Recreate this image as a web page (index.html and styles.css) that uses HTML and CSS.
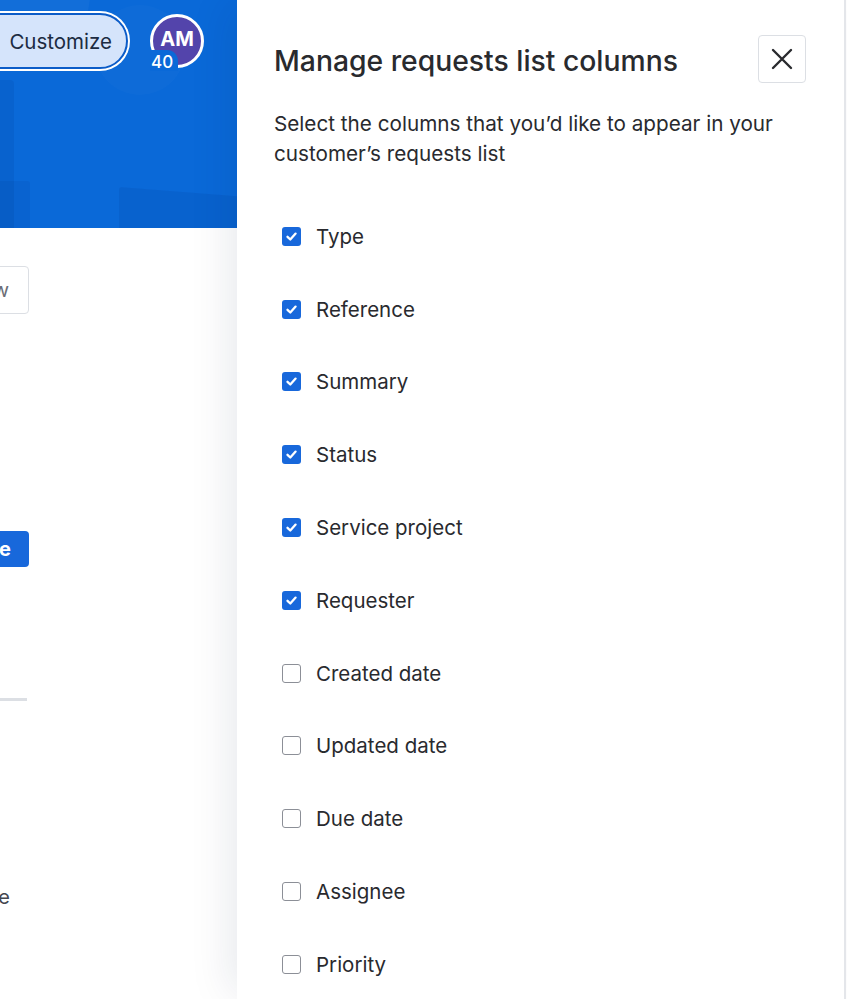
FILE: index.html
```html
<!DOCTYPE html>
<html lang="en">
<head>
    <meta charset="UTF-8">
    <meta name="viewport" content="width=device-width, initial-scale=1.0">
    <title>Manage requests list columns</title>
    <link rel="stylesheet" href="styles.css">
</head>
<body>
    <div class="app">
        <div class="backdrop">
            <div class="banner">
                <div class="shape circle-a"></div>
                <div class="shape circle-b"></div>
                <div class="shape tower"></div>
                <div class="shape block"></div>
                <div class="shape roof"></div>
                <div class="banner-actions">
                    <button class="customize-btn">Customize</button>
                    <div class="avatar">
                        AM
                        <span class="avatar-count">40</span>
                    </div>
                </div>
            </div>
            <div class="page-body">
                <div class="view-btn">Save view</div>
                <div class="primary-btn">Save</div>
                <div class="divider"></div>
                <div class="page-text">Due date</div>
            </div>
        </div>

        <aside class="drawer">
            <div class="drawer-header">
                <h2>Manage requests list columns</h2>
                <button class="close-btn" aria-label="Close">
                    <svg width="22" height="22" viewBox="0 0 22 22">
                        <path d="M2 2 L20 20 M20 2 L2 20" stroke="#292a2e" stroke-width="2.4" stroke-linecap="round"/>
                    </svg>
                </button>
            </div>
            <p class="drawer-desc">Select the columns that you’d like to appear in your customer’s requests list</p>

            <ul class="column-list">
                <li class="column-item"><span class="checkbox checked"></span>Type</li>
                <li class="column-item"><span class="checkbox checked"></span>Reference</li>
                <li class="column-item"><span class="checkbox checked"></span>Summary</li>
                <li class="column-item"><span class="checkbox checked"></span>Status</li>
                <li class="column-item"><span class="checkbox checked"></span>Service project</li>
                <li class="column-item"><span class="checkbox checked"></span>Requester</li>
                <li class="column-item"><span class="checkbox"></span>Created date</li>
                <li class="column-item"><span class="checkbox"></span>Updated date</li>
                <li class="column-item"><span class="checkbox"></span>Due date</li>
                <li class="column-item"><span class="checkbox"></span>Assignee</li>
                <li class="column-item"><span class="checkbox"></span>Priority</li>
            </ul>
        </aside>
    </div>
</body>
</html>
```

FILE: styles.css
```css
* {
    margin: 0;
    padding: 0;
    box-sizing: border-box;
    font-family: Inter, 'Noto Sans', sans-serif;
}

body {
    background: white;
    color: #292a2e;
}

.app {
    display: flex;
    height: 999px;
    overflow: hidden;
    padding-right: 1px;
}

/* page behind the drawer */
.backdrop {
    width: 237px;
    flex-shrink: 0;
    overflow: hidden;
    background: white;
}

.banner {
    position: relative;
    height: 228px;
    background: #0a69d8;
    overflow: hidden;
}

.shape {
    position: absolute;
}

.circle-a {
    left: -40px;
    top: -70px;
    width: 130px;
    height: 130px;
    border-radius: 50%;
    background: rgba(255, 255, 255, 0.035);
}

.circle-b {
    left: 95px;
    top: 5px;
    width: 90px;
    height: 90px;
    border-radius: 50%;
    background: rgba(255, 255, 255, 0.02);
}

.tower {
    left: -20px;
    top: 80px;
    width: 34px;
    height: 148px;
    border-radius: 0 4px 0 0;
    background: rgba(0, 40, 120, 0.1);
}

.block {
    left: -20px;
    top: 181px;
    width: 50px;
    height: 47px;
    border-radius: 0 3px 0 0;
    background: rgba(0, 40, 120, 0.08);
}

.roof {
    left: 119px;
    top: 187px;
    width: 130px;
    height: 41px;
    background: rgba(0, 40, 120, 0.1);
    clip-path: polygon(0 0, 100% 25%, 100% 100%, 0 100%);
    border-radius: 3px 0 0 0;
}

.banner-actions {
    position: relative;
    display: flex;
    justify-content: flex-end;
    align-items: center;
    gap: 22px;
    padding: 13px 33px 0 0;
}

.customize-btn {
    height: 56px;
    width: 170px;
    flex-shrink: 0;
    padding-right: 14px;
    text-align: right;
    font-size: 20.5px;
    color: #1c2b42;
    background: #d5e4fb;
    border: 2px solid #0c5cc8;
    border-radius: 28px;
    box-shadow: 0 0 0 2px white;
}

.avatar {
    position: relative;
    width: 54px;
    height: 54px;
    flex-shrink: 0;
    border-radius: 50%;
    border: 3px solid white;
    background: #5344ab;
    color: white;
    font-size: 20px;
    font-weight: 700;
    display: flex;
    align-items: center;
    justify-content: center;
    padding-bottom: 4px;
}

.avatar-count {
    position: absolute;
    left: -3px;
    bottom: -6px;
    padding: 3px 5px 0 1px;
    background: #0a69d8;
    border-radius: 0 11px 0 0;
    font-size: 17px;
    font-weight: 500;
    line-height: 18px;
}

.page-body {
    display: flex;
    flex-direction: column;
    align-items: flex-end;
}

.view-btn {
    margin-top: 38px;
    margin-right: 208px;
    width: 140px;
    height: 48px;
    flex-shrink: 0;
    padding-right: 19px;
    border: 1px solid #dcdfe4;
    border-radius: 4px;
    font-size: 20px;
    line-height: 46px;
    text-align: right;
    color: #6b6e76;
    white-space: nowrap;
}

.primary-btn {
    margin-top: 217px;
    margin-right: 208px;
    width: 120px;
    height: 36px;
    flex-shrink: 0;
    padding-right: 18px;
    background: #1868db;
    border-radius: 4px;
    color: white;
    font-size: 20px;
    font-weight: 700;
    line-height: 36px;
    text-align: right;
}

.divider {
    margin-top: 131px;
    margin-right: 210px;
    width: 200px;
    height: 3px;
    flex-shrink: 0;
    background: #dcdfe4;
}

.page-text {
    margin-top: 184px;
    margin-right: 227px;
    font-size: 20px;
    color: #44474f;
    white-space: nowrap;
}

/* drawer */
.drawer {
    position: relative;
    z-index: 1;
    flex: 1;
    padding: 35px 38px 0 37px;
    background: white;
    border-right: 2px solid #e4e6ea;
    box-shadow: -12px 0 40px -6px rgba(9, 30, 66, 0.1);
}

.drawer-header {
    display: flex;
    justify-content: space-between;
    align-items: center;
}

.drawer-header h2 {
    font-size: 28.3px;
    font-weight: 500;
    color: #292a2e;
    padding-top: 3px;
}

.close-btn {
    width: 48px;
    height: 48px;
    display: flex;
    align-items: center;
    justify-content: center;
    background: white;
    border: 1px solid #dcdfe4;
    border-radius: 4px;
}

.drawer-desc {
    margin-top: 26px;
    font-size: 20.7px;
    line-height: 30px;
    color: #292a2e;
}

.column-list {
    list-style: none;
    margin-top: 31px;
}

.column-item {
    display: flex;
    align-items: center;
    gap: 15px;
    height: 72.8px;
    padding-left: 8px;
    font-size: 20.5px;
    color: #292a2e;
}

.checkbox {
    width: 19px;
    height: 19px;
    flex-shrink: 0;
    border: 1.5px solid #8c8f97;
    border-radius: 3px;
    background: white;
}

.checkbox.checked {
    border: none;
    background: #1868db url("data:image/svg+xml,%3Csvg xmlns='http://www.w3.org/2000/svg' viewBox='0 0 19 19'%3E%3Cpath d='M5.5 9.8 L8.3 12.5 L13.6 6.6' fill='none' stroke='white' stroke-width='2.3' stroke-linecap='round' stroke-linejoin='round'/%3E%3C/svg%3E") center / 19px 19px no-repeat;
}
```
